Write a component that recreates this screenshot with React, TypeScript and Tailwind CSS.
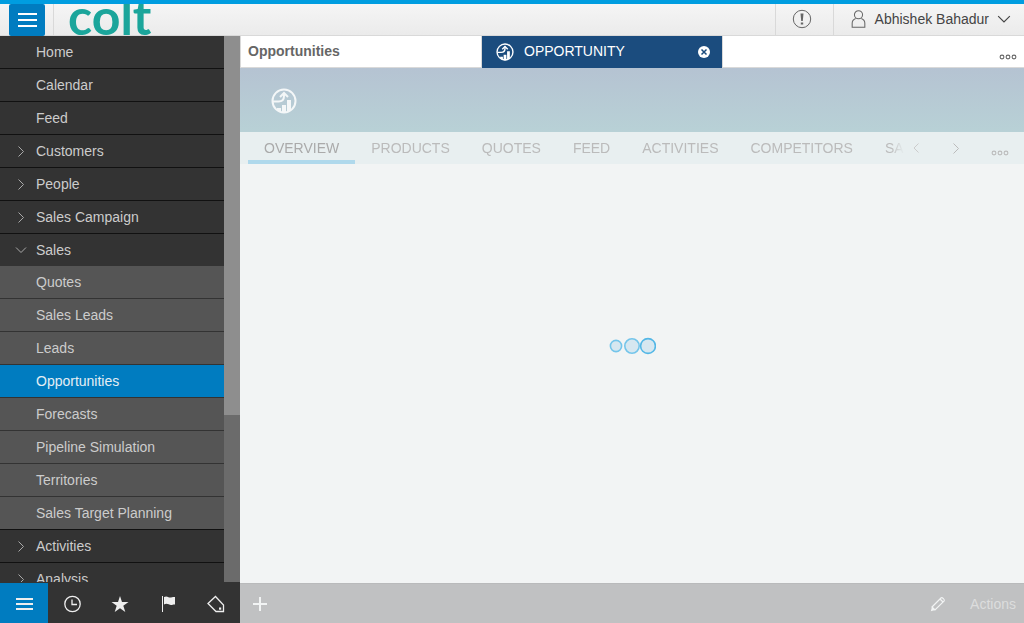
import { useState } from "react";
import type { ReactNode } from "react";

type NavItem = { label: string; kind: "leaf" | "group" | "open" | "child" };

const NAV: NavItem[] = [
  { label: "Home", kind: "leaf" },
  { label: "Calendar", kind: "leaf" },
  { label: "Feed", kind: "leaf" },
  { label: "Customers", kind: "group" },
  { label: "People", kind: "group" },
  { label: "Sales Campaign", kind: "group" },
  { label: "Sales", kind: "open" },
  { label: "Quotes", kind: "child" },
  { label: "Sales Leads", kind: "child" },
  { label: "Leads", kind: "child" },
  { label: "Opportunities", kind: "child" },
  { label: "Forecasts", kind: "child" },
  { label: "Pipeline Simulation", kind: "child" },
  { label: "Territories", kind: "child" },
  { label: "Sales Target Planning", kind: "child" },
  { label: "Activities", kind: "group" },
  { label: "Analysis", kind: "group" },
];

const SECTIONS = ["OVERVIEW", "PRODUCTS", "QUOTES", "FEED", "ACTIVITIES", "COMPETITORS", "SA"];

function Chevron({ dir, className }: { dir: "left" | "right" | "down"; className: string }) {
  const d = { left: "M8.500 1.500 4 6l4.500 4.500", right: "M3.500 1.500 8.500 6.500 3.500 11.500", down: "M1 3.500 6 8.500l5-5" }[dir];
  return (
    <svg viewBox="0 0 12 12" className={className} fill="none" stroke="currentColor" aria-hidden="true">
      <path d={d} />
    </svg>
  );
}

function Dots({ className }: { className: string }) {
  return (
    <svg viewBox="0 0 18 6" className={className} fill="none" stroke="currentColor" strokeWidth="1.100" aria-hidden="true">
      <circle cx="3" cy="3" r="1.900" />
      <circle cx="9" cy="3" r="1.900" />
      <circle cx="15" cy="3" r="1.900" />
    </svg>
  );
}

function OpportunityIcon({ className }: { className: string }) {
  return (
    <svg viewBox="0 0 26 26" className={className} fill="none" stroke="currentColor" strokeWidth="2" aria-hidden="true">
      <circle cx="13" cy="13" r="11.500" />
      <path d="M2 13.500h5.500c3.500 0 5.500-2 5.500-5.500V5" />
      <path d="M9 9 13 5l4 4" />
      <g fill="currentColor" stroke="none">
        <path d="M6 20h4v4.500L6 22z" />
        <path d="M11 17h4v8h-4z" />
        <path d="M16 12h4v10l-4 2.500z" />
      </g>
    </svg>
  );
}

function Bars({ className }: { className: string }) {
  return (
    <svg viewBox="0 0 20 16" className={className} fill="currentColor" aria-hidden="true">
      <path d="M1 1h19v2H1zM1 7h19v2H1zM1 13h19v2H1z" />
    </svg>
  );
}

const TOOLS: { label: string; icon: ReactNode }[] = [
  { label: "Menu", icon: <path d="M2 4h17v2H2zM2 9h17v2H2zM2 14h17v2H2z" fill="currentColor" stroke="none" /> },
  {
    label: "Recent",
    icon: (
      <>
        <circle cx="10.500" cy="10" r="7.700" />
        <path d="M10 5.500v5h5" />
      </>
    ),
  },
  {
    label: "Favorites",
    icon: <path d="m10 2 2 6h6.500l-5.200 3.800 2 6.200-5.300-3.800L4.700 18l2-6.200L1.500 8H8z" fill="currentColor" stroke="none" />,
  },
  {
    label: "Flags",
    icon: (
      <>
        <path d="M4.500 2v16" strokeWidth="1" />
        <path d="M6 3c3-1.500 4 .5 6 .5 1.700 0 3-.8 5-.5v7.500c-1.500-.3-2.500.5-4 .5C11 11 9 8.800 6 10.500z" fill="currentColor" stroke="none" />
      </>
    ),
  },
  {
    label: "Tags",
    icon: (
      <>
        <path d="M2 9.500 9.500 2.500l8 8.500v6.500H10z" />
        <path d="M13 13.500h2.200v2.200H13z" fill="currentColor" stroke="none" />
      </>
    ),
  },
];

export default function App() {
  const [current, setCurrent] = useState("Opportunities");
  const [section, setSection] = useState("OVERVIEW");

  return (
    <div className="flex h-screen flex-col overflow-hidden bg-[#f2f4f4] font-['Liberation_Sans',Arial,sans-serif] text-sm">
      <header className="flex h-9 shrink-0 border-t-4 border-b border-t-[#009de0] border-b-[#d9d9d9] bg-linear-to-b from-[#f5f5f5] to-[#ebebeb]">
        <div className="flex w-[54px] border-r border-[#d9d9d9] pl-[9px]">
          <button aria-label="Toggle navigation" className="flex h-8 w-9 items-center justify-center rounded-xs bg-[#007cc0] pb-px text-white">
            <Bars className="h-4 w-5" />
          </button>
        </div>
        <a href="#home" className="ml-[14px] h-8 overflow-hidden font-['Lato',sans-serif] text-[50px] leading-6 font-bold text-[#1ba59b]">
          colt
        </a>
        <div className="ml-auto flex text-[#444]">
          <button aria-label="Notifications" className="flex w-[58px] items-center justify-center border-l border-[#d9d9d9] pr-1 pb-px text-[#666]">
            <svg viewBox="0 0 20 20" className="size-5" fill="none" stroke="currentColor" aria-hidden="true">
              <circle cx="10" cy="10" r="8.700" />
              <path d="M8.500 4.500h3l-.7 7.500H9.200zM8.800 13.400h2.400v2.200H8.800z" fill="currentColor" stroke="none" />
            </svg>
          </button>
          <button className="flex items-center border-l border-[#d9d9d9] pr-[13px] pb-0.5 pl-4">
            <svg viewBox="0 0 18 20" className="mr-2 h-5 w-[17px] text-[#666]" fill="none" stroke="currentColor" strokeWidth="1.100" aria-hidden="true">
              <circle cx="9" cy="5.500" r="4.300" />
              <path d="M6 9.500C3.500 10.500 2.300 12 2.300 14.500v4.200h13.400v-4.200c0-2.500-1.200-4-3.700-5" />
            </svg>
            Abhishek Bahadur
            <Chevron dir="down" className="ml-2 size-[14px]" />
          </button>
        </div>
      </header>

      <div className="flex min-h-0 flex-1">
        <aside className="flex w-60 shrink-0 flex-col bg-[#333]">
          <div className="flex min-h-0 flex-1 border-b border-[#333]">
            <nav aria-label="Work centers" className="flex-1 overflow-hidden">
              <ul>
                {NAV.map((item) => {
                  const child = item.kind === "child";
                  const active = item.label === current;
                  const last = item.label === "Sales Target Planning";
                  const tone = active
                    ? "bg-[#007cc0] text-[#e4eef4]"
                    : child
                      ? "bg-[#555] text-[#ccc]"
                      : "bg-[#333] text-[#ccc]";
                  const edge = item.kind === "open" ? "" : child && !last ? "border-b border-[#333]" : "border-b border-[#111]";
                  return (
                    <li key={item.label} className={edge}>
                      <button onClick={() => setCurrent(item.label)} className={`flex h-8 w-full items-center text-left ${tone}`}>
                        <span className="flex w-9 justify-center pl-[6px] text-[#aaa]">
                          {item.kind === "group" && <Chevron dir="right" className="size-3" />}
                          {item.kind === "open" && <Chevron dir="down" className="size-3" />}
                        </span>
                        {item.label}
                      </button>
                    </li>
                  );
                })}
              </ul>
            </nav>
            <div className="w-4 bg-[#6b6b6b]">
              <div className="h-[69.4%] bg-[#8e8e8e]" />
            </div>
          </div>
          <div className="grid h-10 shrink-0 grid-cols-5">
            {TOOLS.map((tool, i) => (
              <button key={tool.label} aria-label={tool.label} className={`flex items-center justify-center pt-0.5 text-[#eee] ${i === 0 ? "bg-[#007cc0]" : ""}`}>
                <svg viewBox="0 0 20 20" className="size-5" fill="none" stroke="currentColor" strokeWidth="1.300" aria-hidden="true">
                  {tool.icon}
                </svg>
              </button>
            ))}
          </div>
        </aside>

        <main className="flex min-w-0 flex-1 flex-col">
          <div className="flex h-8 shrink-0 bg-white">
            <button className="flex w-[242px] items-center border-x border-b border-[#d9d9d9] px-[7px] pb-px text-left font-bold text-[#666]">
              Opportunities
            </button>
            <div className="flex w-60 items-center bg-[#1b4c7e] pr-3 pl-[14px] pb-px text-white">
              <OpportunityIcon className="size-[18px]" />
              <span className="ml-[10px] flex-1 pb-px">OPPORTUNITY</span>
              <button aria-label="Close tab" className="pt-px">
                <svg viewBox="0 0 12 12" className="size-3" aria-hidden="true">
                  <circle cx="6" cy="6" r="6" fill="#fff" />
                  <path d="m3.500 3.500 5 5m0-5-5 5" stroke="#1b4c7e" strokeWidth="1.500" />
                </svg>
              </button>
            </div>
            <div className="flex flex-1 items-end justify-end border-b border-l border-[#d9d9d9] pr-[7px] pb-[7px]">
              <button aria-label="More tabs" className="text-[#666]">
                <Dots className="h-[6px] w-[18px]" />
              </button>
            </div>
          </div>

          <div className="flex h-16 shrink-0 items-center bg-linear-to-b from-[#b5c3d2] to-[#b8d1d6] px-[31px] text-[#f4f7f8]">
            <OpportunityIcon className="mt-0.5 size-[26px]" />
          </div>

          <div className="flex h-8 shrink-0 bg-[#e8eff0] text-[#bbb]">
            <div role="tablist" className="flex min-w-0 flex-1 overflow-hidden pl-2 mask-r-from-98%">
              {SECTIONS.map((name) => (
                <button
                  key={name}
                  role="tab"
                  aria-selected={name === section}
                  onClick={() => setSection(name)}
                  className={`shrink-0 border-b-4 px-4 pt-1 ${name === section ? "border-[#b0d9ec] text-[#aaa]" : "border-transparent"}`}
                >
                  {name}
                </button>
              ))}
            </div>
            <div className="flex w-[120px] shrink-0 items-center">
              <button aria-label="Scroll left" className="ml-[6px] text-[#ccc]">
                <Chevron dir="left" className="size-3" />
              </button>
              <button aria-label="Scroll right" className="ml-7">
                <Chevron dir="right" className="size-3" />
              </button>
              <button aria-label="More sections" className="mt-[10px] mr-[15px] ml-auto">
                <Dots className="h-[6px] w-[18px]" />
              </button>
            </div>
          </div>

          <div role="status" aria-label="Loading" className="flex min-h-0 flex-1 items-center justify-center pb-14">
            <svg viewBox="0 0 48 18" className="h-[18px] w-12" fill="#d6e7f0" stroke="#74c5ea" strokeWidth="1.600" aria-hidden="true">
              <circle cx="8" cy="9" r="5.600" />
              <circle cx="24" cy="9" r="7.200" />
              <circle cx="40" cy="9" r="7.400" stroke="#53b7e6" />
            </svg>
          </div>

          <footer className="flex h-10 shrink-0 items-center border-t border-[#b9babb] bg-[#c0c1c2] pr-2 pl-3 text-[#f2f4f4]">
            <button aria-label="Add">
              <svg viewBox="0 0 16 16" className="size-4" stroke="currentColor" strokeWidth="2" aria-hidden="true">
                <path d="M8 1v14M1 8h14" />
              </svg>
            </button>
            <button aria-label="Edit" className="mr-6 ml-auto">
              <svg viewBox="0 0 16 16" className="size-4" fill="none" stroke="currentColor" strokeWidth="1.200" aria-hidden="true">
                <path d="m2 11 9.200-9.200c1-.8 3.800 2 3 3L5 14z" />
                <path d="m10 3 3 3" />
                <path d="m.8 15.200 1.200-4.500L5.300 14z" fill="currentColor" stroke="none" />
              </svg>
            </button>
            <button className="text-[#dcdddd]">Actions</button>
          </footer>
        </main>
      </div>
    </div>
  );
}
